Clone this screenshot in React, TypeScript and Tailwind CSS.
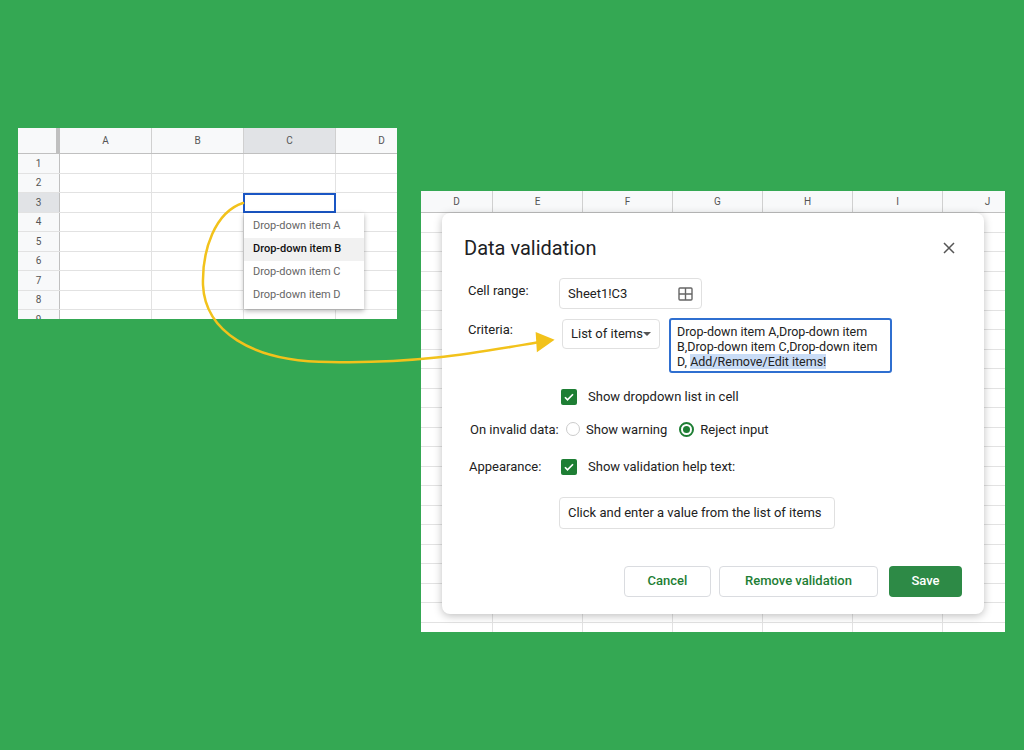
const font = { fontFamily: "Roboto, 'Liberation Sans', sans-serif" };

const Grid = ({ cols, rows, rowH, headerH, firstW }: { cols: { l: string; w: number; sel?: boolean }[]; rows: number; rowH: number; headerH: number; firstW: number }) => (
  <div className="flex flex-col">
    <div className="flex border-b border-[#c0c0c0] bg-[#f8f9fa]" style={{ height: headerH }}>
      {firstW > 0 && <div className="shrink-0 border-r-4 border-[#c0c0c0] bg-[#f8f9fa]" style={{ width: firstW }} />}
      {cols.map((c) => (
        <div key={c.l} className={`flex shrink-0 items-center justify-center border-r border-[#d0d0d0] text-[10px] text-[#555] ${c.sel ? "bg-[#e1e3e6]" : ""}`} style={{ width: c.w }}>
          {c.l}
        </div>
      ))}
    </div>
    {Array.from({ length: rows }).map((_, i) => (
      <div key={i} className="flex border-b border-[#e2e2e2]" style={{ height: rowH }}>
        {firstW > 0 && (
          <div className={`flex shrink-0 items-center justify-center border-r border-[#c0c0c0] text-[10px] text-[#555] ${i === 2 ? "bg-[#e1e3e6]" : "bg-[#f8f9fa]"}`} style={{ width: firstW }}>
            {i + 1}
          </div>
        )}
        {cols.map((c) => (
          <div key={c.l} className="shrink-0 border-r border-[#e2e2e2]" style={{ width: c.w }} />
        ))}
      </div>
    ))}
  </div>
);

const Check = () => (
  <span className="flex h-[16px] w-[16px] items-center justify-center rounded-[2px] bg-[#1e7e34]">
    <svg width="12" height="12" viewBox="0 0 24 24" fill="none" stroke="white" strokeWidth="3.5"><path d="M4 12.5l5 5L20 6.5" /></svg>
  </span>
);

export default function App() {
  return (
    <div className="relative h-[750px] w-[1024px] overflow-hidden bg-[#34a853]" style={font}>
      {/* left sheet */}
      <div className="absolute left-[18px] top-[128px] h-[191px] w-[379px] overflow-hidden bg-white">
        <Grid firstW={42} headerH={26} rowH={19.5} rows={9} cols={[{ l: "A", w: 92 }, { l: "B", w: 92 }, { l: "C", w: 92, sel: true }, { l: "D", w: 92 }]} />
        <div className="absolute left-[225px] top-[65px] h-[20px] w-[93px] border-2 border-[#1a56c4]" />
        <div className="absolute left-[226px] top-[85px] flex w-[120px] flex-col bg-white py-[2px] text-[11px] text-[#666] shadow-[0_2px_5px_rgba(0,0,0,0.3)]">
          <div className="flex h-[23px] items-center px-[9px]">Drop-down item A</div>
          <div className="flex h-[23px] items-center bg-[#f1f1f1] px-[9px] font-medium text-[#111]">Drop-down item B</div>
          <div className="flex h-[23px] items-center px-[9px]">Drop-down item C</div>
          <div className="flex h-[23px] items-center px-[9px]">Drop-down item D</div>
        </div>
      </div>

      {/* right sheet */}
      <div className="absolute left-[421px] top-[191px] h-[441px] w-[584px] overflow-hidden bg-white">
        <Grid firstW={0} headerH={22} rowH={19.5} rows={22} cols={[{ l: "D", w: 72 }, { l: "E", w: 90 }, { l: "F", w: 90 }, { l: "G", w: 90 }, { l: "H", w: 90 }, { l: "I", w: 90 }, { l: "J", w: 90 }]} />
      </div>

      {/* dialog */}
      <div className="absolute left-[442px] top-[213px] flex h-[401px] w-[542px] flex-col rounded-[8px] bg-white px-[22px] pt-[20px] text-[13px] text-[#222] shadow-[0_2px_8px_rgba(0,0,0,0.25)]">
        <div className="flex items-center justify-between">
          <span className="text-[20px] text-[#202124]">Data validation</span>
          <svg className="mr-[6px]" width="14" height="14" viewBox="0 0 14 14" stroke="#555" strokeWidth="1.5"><path d="M2 2l10 10M12 2L2 12" /></svg>
        </div>
        <div className="mt-[15px] flex items-start">
          <span className="mt-[3px] w-[95px] pl-[4px]">Cell range:</span>
          <div className="flex h-[31px] w-[143px] items-center justify-between rounded-[4px] border border-[#e0e0e0] px-[8px]">
            <span>Sheet1!C3</span>
            <svg width="15" height="14" viewBox="0 0 15 14" fill="none" stroke="#666" strokeWidth="1.4"><rect x="1" y="1" width="13" height="12" rx="1" /><path d="M7.5 1v12M1 7h13" /></svg>
          </div>
        </div>
        <div className="mt-[10px] flex items-start">
          <span className="mt-[1px] w-[98px] pl-[4px]">Criteria:</span>
          <div className="flex h-[30px] w-[98px] items-center justify-between whitespace-nowrap rounded-[4px] border border-[#e0e0e0] px-[8px]">
            <span>List of items</span>
            <svg width="8" height="5" viewBox="0 0 8 5"><path d="M0 0h8L4 4z" fill="#555" /></svg>
          </div>
          <div className="ml-[9px] -mt-[1px] h-[55px] w-[223px] rounded-[3px] border-2 border-[#2f6fd0] pl-[6px] pr-[10px] pt-[4px] text-[12.5px] leading-[15px]">
            Drop-down item A,Drop-down item B,Drop-down item C,Drop-down item D, <span className="bg-[#c9dcf6]">Add/Remove/Edit items!</span>
          </div>
        </div>
        <div className="ml-[97px] mt-[14px] flex items-center gap-[11px]">
          <Check />
          <span>Show dropdown list in cell</span>
        </div>
        <div className="mt-[13px] flex items-center">
          <span className="w-[102px] pl-[6px]">On invalid data:</span>
          <span className="h-[14px] w-[14px] rounded-full border border-[#ccc]" />
          <span className="ml-[6px]">Show warning</span>
          <span className="ml-[12px] flex h-[15px] w-[15px] items-center justify-center rounded-full border-2 border-[#1e7e34]"><span className="h-[7px] w-[7px] rounded-full bg-[#1e7e34]" /></span>
          <span className="ml-[6px]">Reject input</span>
        </div>
        <div className="mt-[18px] flex items-center">
          <span className="w-[97px] pl-[5px]">Appearance:</span>
          <Check />
          <span className="ml-[11px]">Show validation help text:</span>
        </div>
        <div className="ml-[95px] mt-[20px] flex h-[32px] w-[276px] items-center rounded-[4px] border border-[#e0e0e0] px-[8px]">
          Click and enter a value from the list of items
        </div>
        <div className="mt-[37px] flex justify-end gap-[8px] font-medium">
          <div className="flex h-[31px] w-[87px] items-center justify-center rounded-[4px] border border-[#dadce0] text-[#1e7e34]">Cancel</div>
          <div className="flex h-[31px] w-[159px] items-center justify-center rounded-[4px] border border-[#dadce0] text-[#1e7e34]">Remove validation</div>
          <div className="ml-[3px] flex h-[31px] w-[73px] items-center justify-center rounded-[4px] bg-[#2d8a46] text-white">Save</div>
        </div>
      </div>

      {/* arrow */}
      <svg className="pointer-events-none absolute left-0 top-0" width="1024" height="750" fill="none" stroke="#f2c21b" strokeWidth="2.5" strokeLinecap="round">
        <path d="M243 203 C215 212 202 250 203 285 C205 330 250 362 330 362 C420 364 480 352 540 342" />
        <path d="M537 334 L552 340 L538 350 Z" fill="#f2c21b" />
      </svg>
    </div>
  );
}
